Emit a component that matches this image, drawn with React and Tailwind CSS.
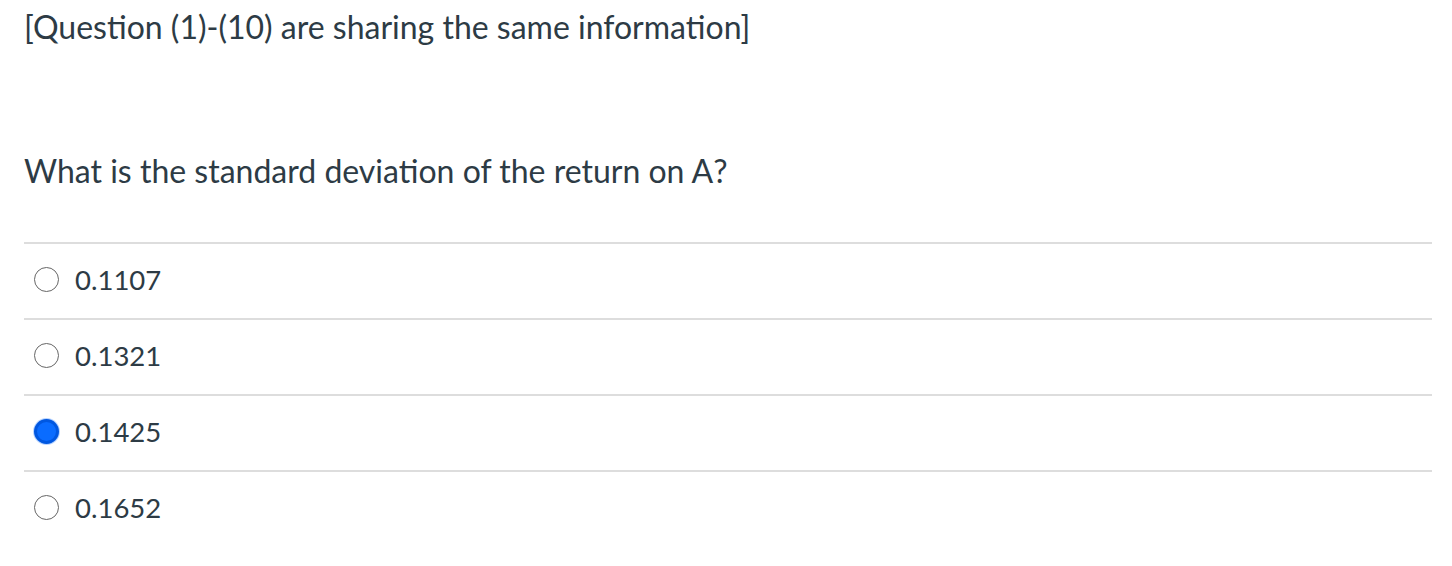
const options = [
  { value: '0.1107', selected: false },
  { value: '0.1321', selected: false },
  { value: '0.1425', selected: true },
  { value: '0.1652', selected: false },
]

export default function App() {
  return (
    <div className="w-[1452px] h-[566px] bg-white text-[#2d3b45] font-['Lato',sans-serif] overflow-hidden">
      <div className="pl-6 pr-5 pt-[7px]">
        {/* Shared info header */}
        <p className="text-[32px] leading-[40px]">[Question (1)-(10) are sharing the same information]</p>

        {/* Question */}
        <p className="text-[32px] leading-[40px] mt-[104px]">What is the standard deviation of the return on A?</p>

        {/* Answers */}
        <div className="mt-[51px]">
          {options.map((opt) => (
            <label
              key={opt.value}
              className="flex items-center h-[76px] pb-[3px] border-t-2 border-[#dddddd]"
            >
              <span className="ml-[10px] w-[25px] h-[25px] flex items-center justify-center shrink-0">
                {opt.selected ? (
                  <span className="w-[25px] h-[25px] rounded-full bg-[#0a6cff] border-[3px] border-[#0057e0] ring-1 ring-[#b8d4ff]" />
                ) : (
                  <span className="w-[25px] h-[25px] rounded-full border-[1.5px] border-[#666666]" />
                )}
              </span>
              <span className="ml-[16px] text-[27.5px]">{opt.value}</span>
            </label>
          ))}
        </div>
      </div>
    </div>
  )
}
